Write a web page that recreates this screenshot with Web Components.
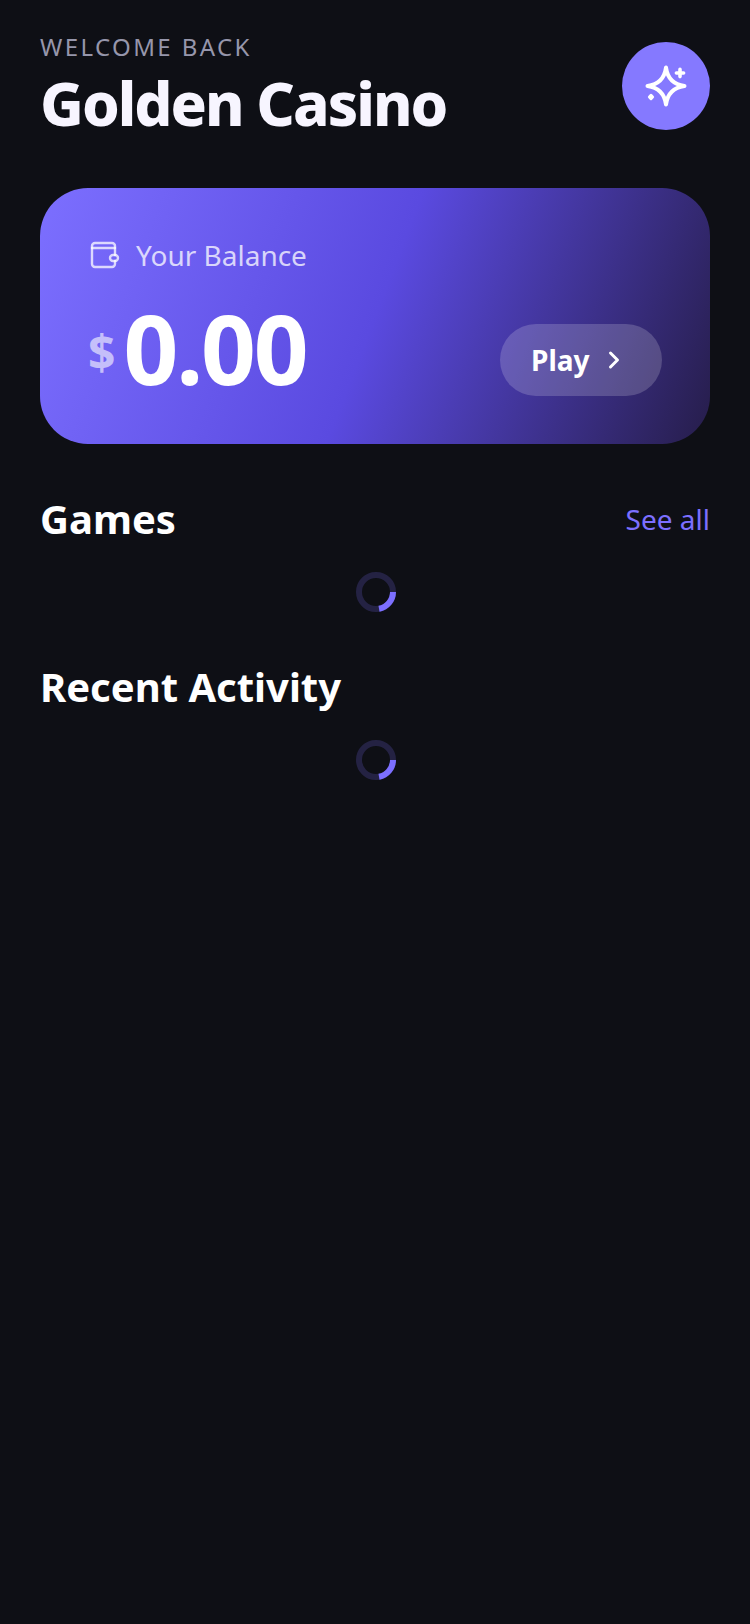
<!DOCTYPE html>
<html><head><meta charset="utf-8"><title>Golden Casino</title>
<style>
html,body{margin:0;padding:0;background:#0e0f15;}
body{font-family:"Noto Sans",sans-serif;color:#fff;width:750px;min-height:1624px;}
</style></head><body>
<app-screen>
  <app-header></app-header>
  <balance-card></balance-card>
  <section-head title="Games" link="See all"></section-head>
  <load-spinner></load-spinner>
  <section-head title="Recent Activity"></section-head>
  <load-spinner></load-spinner>
</app-screen>
<script>
function def(name, html, init){
  customElements.define(name, class extends HTMLElement{
    connectedCallback(){
      if(this.shadowRoot) return;
      const s=this.attachShadow({mode:'open'});
      s.innerHTML=html;
      if(init) init(this,s);
    }
  });
}
def('app-screen',`<style>:host{display:flex;flex-direction:column;padding:30px 40px 0;box-sizing:border-box;width:750px;min-height:1624px;background:#0e0f15}</style><slot></slot>`);
def('app-header',`<style>
:host{display:flex;justify-content:space-between;align-items:flex-start;height:158px}
.l{display:flex;flex-direction:column}
.w{font-size:24px;line-height:34px;letter-spacing:2.4px;color:#9696ab;font-weight:400}
.t{font-size:60px;line-height:72px;font-weight:800;letter-spacing:-1.95px;color:#f7f5ff;margin-top:3px}
.b{width:88px;height:88px;border-radius:50%;background:#8579ff;display:flex;align-items:center;justify-content:center;margin-top:12px}
</style>
<div class="l"><div class="w">WELCOME BACK</div><div class="t">Golden Casino</div></div>
<div class="b"><svg width="48" height="48" viewBox="0 0 48 48" fill="none" stroke="#fff" stroke-width="4" stroke-linecap="round" stroke-linejoin="round">
<path d="M24 5.500C25.500 16.500 31.500 22.500 42.500 24C31.500 25.500 25.500 31.500 24 42.500C22.500 31.500 16.500 25.500 5.500 24C16.500 22.500 22.500 16.500 24 5.500Z"/>
<path d="M38 7.400V14.600M34.400 11H41.600" stroke-width="3.600"/><path d="M9 33.400L10.600 35L9 36.600L7.400 35Z" fill="#fff" stroke-width="3"/></svg></div>`);
def('balance-card',`<style>
:host{display:flex;flex-direction:column;height:256px;box-sizing:border-box;padding:48px;border-radius:48px;background:linear-gradient(111deg,#7c6fff 0%,#5a4ae0 50%,#261d4a 100%)}
.top{display:flex;align-items:center;gap:16px;color:rgba(255,255,255,.75);font-size:28px;line-height:38px}
svg{display:block}
.row{display:flex;justify-content:space-between;align-items:flex-end;margin-top:auto}
.amt{display:flex;align-items:center;gap:8px;margin-bottom:-4px}
.d{font-size:48px;font-weight:700;color:rgba(255,255,255,.6);line-height:60px;margin-top:8px}
.n{font-size:96px;font-weight:700;line-height:104px;letter-spacing:-2.2px}
.p{display:flex;align-items:center;gap:14px;height:72px;width:162px;box-sizing:border-box;padding:0 0 0 31px;border-radius:36px;background:rgba(255,255,255,.18);font-size:28px;font-weight:700}
</style>
<div class="top"><svg width="32" height="32" viewBox="0 0 32 32" fill="none" stroke="currentColor" stroke-width="2.400" stroke-linecap="round" stroke-linejoin="round"><path d="M27 16V7A3 3 0 0 0 24 4H7A3 3 0 0 0 4 7V25A3 3 0 0 0 7 28H24A3 3 0 0 0 27 25V22"/><path d="M4 9H27"/><rect x="22" y="16" width="8" height="6" rx="3"/></svg><span>Your Balance</span></div>
<div class="row"><div class="amt"><span class="d">$</span><span class="n">0.00</span></div>
<div class="p"><span>Play</span><svg width="20" height="24" viewBox="0 0 20 24" fill="none" stroke="#fff" stroke-width="3" stroke-linecap="round" stroke-linejoin="round"><path d="M6.500 5L13.500 12L6.500 19"/></svg></div></div>`);
def('section-head',`<style>
:host{display:flex;justify-content:space-between;align-items:center;height:56px;margin-top:48px}
.t{font-size:40px;line-height:56px;font-weight:700;margin-top:-2px}
.l{font-size:28px;color:#7c6fff;margin-top:-3px}
</style><span class="t"></span><span class="l"></span>`,(h,s)=>{
  s.querySelector('.t').textContent=h.getAttribute('title')||'';
  const l=h.getAttribute('link');const e=s.querySelector('.l');if(l)e.textContent=l;else e.remove();
});
def('load-spinner',`<style>
:host{display:flex;justify-content:center;margin-top:24px;height:40px;padding-left:2px}
svg{display:block}
</style><svg width="40" height="40" viewBox="0 0 40 40" fill="none" stroke-width="6"><circle cx="20" cy="20" r="17" stroke="#7c6fff" stroke-opacity=".2"/><path d="M37 20A17 17 0 0 1 23 36.700" stroke="#7c6fff"/></svg>`);
</script>
</body></html>
